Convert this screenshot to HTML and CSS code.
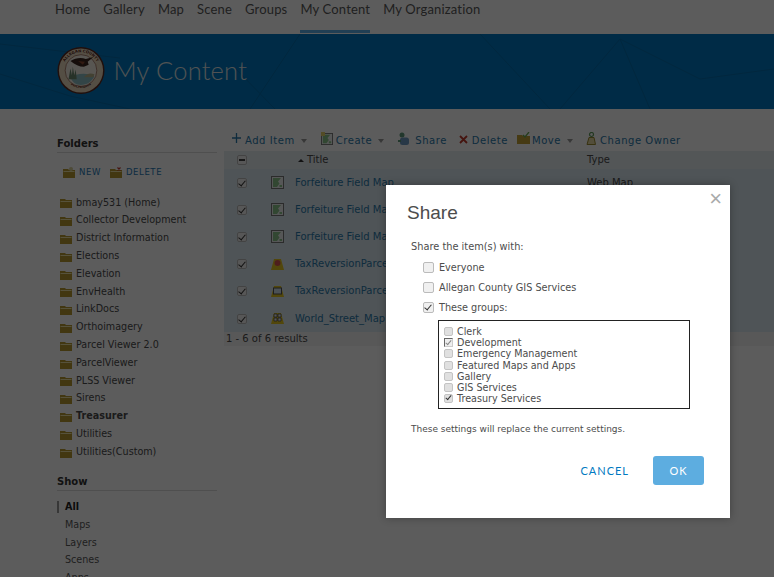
FILE: index.html
```html
<!DOCTYPE html>
<html lang="en">
<head>
<meta charset="utf-8">
<title>My Content</title>
<link rel="stylesheet" href="styles.css">
</head>
<body>
<svg class="defs" width="0" height="0">
  <defs>
    <symbol id="folder" viewBox="0 0 12 10"><path d="M0 1h5l1 1h6v8H0z" fill="#b89a30"/><path d="M.5 3h11v1H.5z" fill="#efe2a6"/></symbol>
    <symbol id="thumb" viewBox="0 0 13 13"><rect x=".5" y=".5" width="12" height="12" fill="#eef2f0" stroke="#777"/><path d="M2 2h8L7 5.500 8.500 7.500 6 11H2zM8.500 9H11v2H8.500z" fill="#8cc48c"/></symbol>
    <symbol id="box" viewBox="0 0 13 13"><path d="M3 1h7l3 11H0z" fill="#e2c61f"/></symbol>
  </defs>
</svg>
<nav class="topnav">
  <a>Home</a><a>Gallery</a><a>Map</a><a>Scene</a><a>Groups</a><a class="on">My Content</a><a>My Organization</a>
</nav>
<header class="banner">
  <svg class="lines" viewBox="0 0 774 75" preserveAspectRatio="none">
    <path d="M0 40L70 62 130 75M250 75L300 0M235 34l40 41M480 0l70 75M560 75l60-70 80 40 74-10M620 5l30 70M0 10l120 14" fill="none" stroke="#056cad" stroke-width="1"/>
  </svg>
  <svg class="seal" viewBox="0 0 50 50">
    <defs>
      <path id="arc-top" d="M6 25a19 19 0 0 1 38 0"/>
      <path id="arc-bot" d="M8 32a18.500 18.500 0 0 0 34 0"/>
    </defs>
    <circle cx="25" cy="25" r="24.500" fill="#5a2a22"/>
    <circle cx="25" cy="25" r="23" fill="#e9d9bd"/>
    <text class="sealtext"><textPath href="#arc-top" startOffset="50%" text-anchor="middle">ALLEGAN COUNTY</textPath></text>
    <text class="sealtext"><textPath href="#arc-bot" startOffset="50%" text-anchor="middle">MICHIGAN</textPath></text>
    <circle cx="25" cy="25" r="16.500" fill="#f4efe3" stroke="#7a3a2a" stroke-width=".6"/>
    <path d="M14 32c5-4 18-5 25-1-3 6-8 9-14 9s-9-3-11-8z" fill="#8fc0c4"/>
    <path d="M28 32c3-4 7-5 11-3l-1 3z" fill="#b9b38c"/>
    <path d="M12 34l2-11 1.500 7 1-9 1.500 9 1.500-6 1 10z" fill="#6d8a70"/>
    <path d="M14 15c5-3 11-4 16-2l8-2-6 5 1 3-5 2c-5 0-9-2-14-6z" fill="#3a251e"/>
    <path d="M22 15l7 1-2 3z" fill="#8a4a30"/>
  </svg>
  <h1>My Content</h1>
</header>
<div class="page">
  <aside class="side">
    <h2>Folders</h2>
    <div class="folderacts">
      <span class="act"><svg class="ico-act" viewBox="0 0 12 11"><use href="#folder" y="1" width="12" height="10"/><circle cx="8" cy="2" r="2" fill="#d8cf9a"/></svg>NEW</span>
      <span class="act"><svg class="ico-act" viewBox="0 0 12 11"><use href="#folder" y="1" width="12" height="10"/><path d="M7.500.500l3 3m0-3l-3 3" stroke="#c0392b" stroke-width="1.200"/></svg>DELETE</span>
    </div>
    <ul class="folders">
      <li><svg class="ico12"><use href="#folder"/></svg>bmay531 (Home)</li>
      <li><svg class="ico12"><use href="#folder"/></svg>Collector Development</li>
      <li><svg class="ico12"><use href="#folder"/></svg>District Information</li>
      <li><svg class="ico12"><use href="#folder"/></svg>Elections</li>
      <li><svg class="ico12"><use href="#folder"/></svg>Elevation</li>
      <li><svg class="ico12"><use href="#folder"/></svg>EnvHealth</li>
      <li><svg class="ico12"><use href="#folder"/></svg>LinkDocs</li>
      <li><svg class="ico12"><use href="#folder"/></svg>Orthoimagery</li>
      <li><svg class="ico12"><use href="#folder"/></svg>Parcel Viewer 2.0</li>
      <li><svg class="ico12"><use href="#folder"/></svg>ParcelViewer</li>
      <li><svg class="ico12"><use href="#folder"/></svg>PLSS Viewer</li>
      <li><svg class="ico12"><use href="#folder"/></svg>Sirens</li>
      <li class="b"><svg class="ico12"><use href="#folder"/></svg>Treasurer</li>
      <li><svg class="ico12"><use href="#folder"/></svg>Utilities</li>
      <li><svg class="ico12"><use href="#folder"/></svg>Utilities(Custom)</li>
    </ul>
    <h2 class="show">Show</h2>
    <ul class="filters">
      <li class="cur">All</li><li>Maps</li><li>Layers</li><li>Scenes</li><li>Apps</li>
    </ul>
  </aside>
  <main class="content">
    <div class="tools">
      <span class="t"><svg class="plus" viewBox="0 0 9 10"><path d="M4.500 0v10M0 5h9" stroke="#2b7aab" stroke-width="1.300"/></svg>Add Item<i class="caret"></i></span>
      <span class="t t-create"><svg class="ico-tool" viewBox="0 0 13 13"><use href="#thumb" x="0" y="1" width="12" height="12"/><rect x="0" y="0" width="4" height="4" fill="#e6d26a"/></svg>Create<i class="caret"></i></span>
      <span class="t t-share"><svg class="ico-tool" viewBox="0 0 13 13"><circle cx="5" cy="3" r="2.500" fill="#5f9a7a"/><rect x="3" y="5.500" width="9" height="7.500" rx="2.500" fill="#6f9cc4"/><path d="M1 9h3" stroke="#5f9a7a" stroke-width="2"/></svg>Share</span>
      <span class="t t-del"><svg class="xmark" viewBox="0 0 9 9"><path d="M1 1l7 7M8 1L1 8" stroke="#c0392b" stroke-width="1.800"/></svg>Delete</span>
      <span class="t t-move"><svg class="ico-tool" viewBox="0 0 13 13"><path d="M0 3h5l1 1h7v8H0z" fill="#c2a235"/><path d="M6 3l2 2 4-5" fill="none" stroke="#6aa84f" stroke-width="1.300"/></svg>Move<i class="caret"></i></span>
      <span class="t t-owner"><svg class="ico-tool" viewBox="0 0 13 13"><circle cx="7.500" cy="2.500" r="2" fill="none" stroke="#5f9a5a" stroke-width="1.200"/><path d="M3 12.500l2-7h5l1.500 7z" fill="#e6d9a0" stroke="#9a8a30"/></svg>Change Owner</span>
    </div>
    <div class="table">
      <div class="row head">
        <span class="c-check"><i class="cb dash"></i></span><span class="c-icon"></span>
        <span class="c-title"><i class="sort"></i>Title</span><span class="c-type">Type</span>
      </div>
      <div class="row"><span class="c-check"><i class="cb on"></i></span><span class="c-icon"><svg class="ico13"><use href="#thumb"/></svg></span><a class="c-title">Forfeiture Field Map</a><span class="c-type">Web Map</span></div>
      <div class="row"><span class="c-check"><i class="cb on"></i></span><span class="c-icon"><svg class="ico13"><use href="#thumb"/></svg></span><a class="c-title">Forfeiture Field Map</a><span class="c-type"></span></div>
      <div class="row"><span class="c-check"><i class="cb on"></i></span><span class="c-icon"><svg class="ico13"><use href="#thumb"/></svg></span><a class="c-title">Forfeiture Field Map</a><span class="c-type"></span></div>
      <div class="row"><span class="c-check"><i class="cb on"></i></span><span class="c-icon"><svg class="ico13"><use href="#box"/><circle cx="6.500" cy="5" r="3" fill="#d9534f"/></svg></span><a class="c-title">TaxReversionParcels</a><span class="c-type"></span></div>
      <div class="row"><span class="c-check"><i class="cb on"></i></span><span class="c-icon"><svg class="ico13"><use href="#box"/><rect x="2.500" y="3" width="8" height="6" fill="#cfe0ea" stroke="#555"/></svg></span><a class="c-title">TaxReversionParcels</a><span class="c-type"></span></div>
      <div class="row"><span class="c-check"><i class="cb on"></i></span><span class="c-icon"><svg class="ico13"><use href="#box"/><path d="M3 2h3v3H3zM7 2h3v3H7zM3 6h3v3H3zM7 6h3v3H7z" fill="#eee" stroke="#555" stroke-width=".8"/></svg></span><a class="c-title">World_Street_Map</a><span class="c-type"></span></div>
    </div>
    <div class="results">1 - 6 of 6 results</div>
  </main>
</div>
<div class="scrim"></div>
<section class="dialog">
  <button class="close">×</button>
  <h3>Share</h3>
  <p class="lead">Share the item(s) with:</p>
  <label class="opt"><i class="cb big"></i>Everyone</label>
  <label class="opt"><i class="cb big"></i>Allegan County GIS Services</label>
  <label class="opt"><i class="cb big on"></i>These groups:</label>
  <div class="groups">
    <div class="g"><i class="cb sm"></i>Clerk</div>
    <div class="g"><i class="cb sm dis"></i>Development</div>
    <div class="g"><i class="cb sm"></i>Emergency Management</div>
    <div class="g"><i class="cb sm"></i>Featured Maps and Apps</div>
    <div class="g"><i class="cb sm"></i>Gallery</div>
    <div class="g"><i class="cb sm"></i>GIS Services</div>
    <div class="g"><i class="cb sm on"></i>Treasury Services</div>
  </div>
  <p class="note">These settings will replace the current settings.</p>
  <div class="btns"><a class="cancel">CANCEL</a><a class="ok">OK</a></div>
</section>
</body>
</html>
```
FILE: styles.css
```css
* { box-sizing: border-box; }
html, body { margin: 0; height: 577px; overflow: hidden; background: #fff; }
body { position: relative; font: 10px/1.2 "DejaVu Sans", sans-serif; color: #4c4c4c; }
.defs { position: absolute; }
ul { list-style: none; margin: 0; padding: 0; }
.topnav { height: 34px; padding-left: 55px; display: flex; gap: 13px; font: 13px/18px Lato, sans-serif; letter-spacing: .17px; color: #595959; }
.topnav a { height: 33px; border-bottom: 3px solid transparent; }
.topnav a.on { border-bottom-color: #5bb0e8; }
.banner { position: relative; height: 75px; background: #0079c1; display: flex; align-items: center; padding: 0 0 2px 57px; overflow: hidden; }
.lines { position: absolute; inset: 0; width: 100%; height: 100%; }
.seal { position: relative; width: 48px; height: 49px; }
.sealtext { font: 700 4px "DejaVu Sans", sans-serif; fill: #5a2a22; }
.banner h1 { position: relative; margin: 0 0 1px 8.500px; font: 300 25.500px/32px Lato, sans-serif; letter-spacing: .2px; color: #dfe3e6; }
.page { display: flex; height: 468px; }
.side { width: 224px; padding: 28px 7px 0 57px; font-size: 9.600px; }
.side h2 { margin: 0; font-size: 10px; line-height: 13px; font-weight: 700; color: #333; border-bottom: 1px solid #dcdcdc; padding-bottom: 2px; }
.ico12 { width: 12px; height: 10px; flex: none; }
.ico13 { width: 13px; height: 13px; display: block; }
.ico-act { width: 12px; height: 11px; flex: none; }
.ico-tool { width: 13px; height: 13px; flex: none; margin-top: -4px; }
.folderacts { display: flex; gap: 9px; padding: 14px 0 0 6px; height: 40.500px; font-size: 8.500px; letter-spacing: .6px; color: #1f7ab5; }
.act { display: flex; align-items: center; gap: 4px; height: 11px; }
.folders li { height: 17.800px; padding-left: 3px; display: flex; align-items: center; gap: 4px; }
.folders li .ico12 { margin-top: 2px; }
.folders .b { font-weight: 700; }
.side .show { margin-top: 15px; }
.filters { padding-top: 6.500px; color: #595959; }
.filters li { height: 17.800px; line-height: 18px; padding-left: 8px; }
.filters .cur { font-weight: 700; color: #222; position: relative; }
.cur::before { content: ""; position: absolute; left: 0; top: 3px; width: 2px; height: 12px; background: #999; }
.content { flex: 1; min-width: 0; padding-top: 19px; }
.tools { height: 23px; display: flex; align-items: center; padding: 2px 0 0 8px; color: #2b7aab; letter-spacing: .55px; white-space: nowrap; }
.t { display: flex; align-items: center; gap: 2px; }
.t .plus { width: 9px; height: 10px; margin: -5px 2px 0 0; flex: none; }
.t-create { margin-left: 14px; }
.t-share { margin-left: 13px; gap: 5px; }
.t-del { margin-left: 12px; gap: 4px; }
.t-move { margin-left: 9px; }
.t-owner { margin-left: 11px; gap: 3px; }
.xmark { width: 9px; height: 9px; flex: none; margin-top: -2px; }
.caret { width: 0; height: 0; border: 3.500px solid transparent; border-top: 4px solid #999; border-bottom: 0; margin-left: 4px; }
.table { background: #dce8f0; }
.row { height: 27.200px; display: flex; align-items: center; white-space: nowrap; overflow: hidden; }
.row.head { height: 18px; background: #e6edf2; }
.c-check { width: 47px; padding-left: 13px; display: flex; }
.c-icon { width: 24px; }
.c-title { width: 292px; color: #2b7aab; overflow: hidden; display: flex; align-items: center; }
.head .c-title { color: #4c4c4c; padding-left: 3px; }
.sort { width: 0; height: 0; border: 3px solid transparent; border-bottom: 3px solid #333; border-top: 0; margin-right: 3px; }
.c-type { color: #4c4c4c; }
.cb { display: inline-block; position: relative; width: 10px; height: 10px; background: #f0f0f0; border: 1px solid #bbb; border-radius: 2px; flex: none; }
.cb.on::after { content: ""; position: absolute; left: 2px; top: 0; width: 3px; height: 6px; border: solid #333; border-width: 0 1.500px 1.500px 0; transform: rotate(40deg); }
.cb.dash::after { content: ""; position: absolute; left: 1px; right: 1px; top: 3px; height: 2px; background: #444; }
.results { height: 14px; line-height: 14px; background: #f4f4f4; padding-left: 2px; color: #4c4c4c; }
.scrim { position: absolute; inset: 0; background: rgba(0,0,0,.64); }
.dialog { position: absolute; left: 386px; top: 185px; width: 344px; height: 333px; background: #fff; padding: 0 26px 0 25px; color: #4c4c4c; box-shadow: 0 0 8px rgba(0,0,0,.3); }
.close { position: absolute; right: 8px; top: 3px; padding: 0; border: 0; background: none; font: 22px/22px "Liberation Sans", sans-serif; color: #aaa; }
.dialog h3 { margin: 0 0 0 -4px; padding-top: 17px; font: 400 19px/22px "Liberation Sans", sans-serif; color: #4c4c4c; }
.lead { margin: 17px 0 0; height: 12px; line-height: 12px; font-size: 9.800px; }
.opt { display: flex; align-items: center; gap: 5px; margin-left: 12px; height: 20px; font-size: 9.700px; }
.lead + .opt { margin-top: 4.500px; }
.cb.big { width: 11px; height: 11px; }
.groups { margin: 2.500px 14px 0 27px; height: 89px; border: 1px solid #222; padding: 5px 0 0 5px; font-size: 9.600px; }
.g { display: flex; align-items: center; gap: 4px; height: 11.200px; line-height: 11px; }
.cb.sm { width: 9px; height: 9px; background: #e0e0e0; border-color: #c4c4c4; }
.cb.dis { border-color: #666 #ccc #ccc #666; border-radius: 0; background: #eee; }
.cb.dis::after { content: ""; position: absolute; left: 2px; top: 0; width: 2px; height: 5px; border: solid #888; border-width: 0 1px 1px 0; transform: rotate(40deg); }
.cb.sm.on::after { left: 2px; top: -1px; width: 2px; height: 5px; }
.note { margin: 14px 0 0; line-height: 12px; font-size: 9px; }
.btns { display: flex; align-items: center; justify-content: flex-end; gap: 24px; margin: 21px 0 0; font: 11px Lato, sans-serif; }
.cancel { color: #0079c1; letter-spacing: 1px; }
.ok { width: 51px; height: 29px; line-height: 29px; text-align: center; background: #5dade0; color: #fff; border-radius: 3px; letter-spacing: 1px; }
```
